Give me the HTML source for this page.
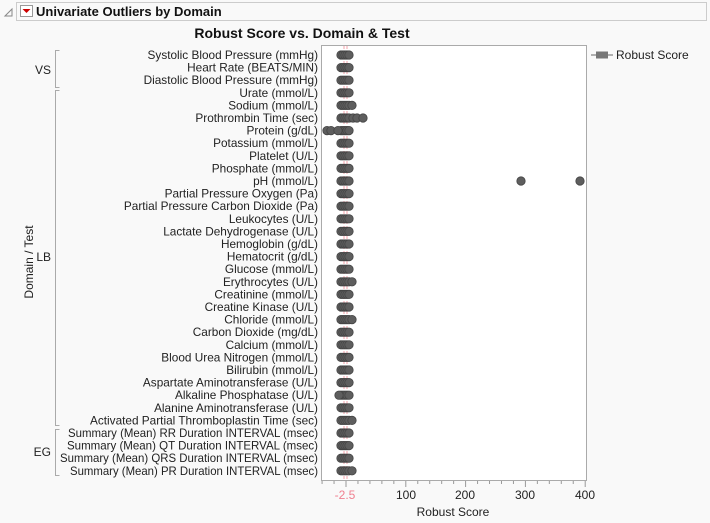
<!DOCTYPE html>
<html><head><meta charset="utf-8"><style>
html,body{margin:0;padding:0;background:#f9f9f9;width:710px;height:523px;overflow:hidden;font-family:"Liberation Sans",sans-serif}
svg text{font-family:"Liberation Sans",sans-serif}
</style></head><body>
<svg id="s" width="710" height="523" xmlns="http://www.w3.org/2000/svg">
<rect x="0" y="0" width="710" height="523" fill="#f9f9f9"/>
<path d="M5 16 L12 9 L12 16 Z" fill="none" stroke="#888" stroke-width="1"/>
<rect x="16.5" y="2.5" width="690" height="18" fill="#f9f9f9" stroke="#ccc"/>
<rect x="20.5" y="5.5" width="12" height="11" fill="#fff" stroke="#999"/>
<path d="M22.5 9 L30.5 9 L26.5 13 Z" fill="#c00"/>
<text x="36" y="16" font-size="13" font-weight="bold" fill="#111">Univariate Outliers by Domain</text>
<text x="302" y="38" font-size="14" font-weight="bold" text-anchor="middle" fill="#111">Robust Score vs. Domain &amp; Test</text>
<rect x="321.5" y="45.5" width="265" height="435" fill="#fff" stroke="#aaa"/>
<line x1="344" y1="46" x2="344" y2="480" stroke="#f4a0a8" stroke-dasharray="3,2"/>
<line x1="347" y1="46" x2="347" y2="480" stroke="#f4a0a8" stroke-dasharray="3,2"/>
<line x1="591" y1="55" x2="613" y2="55" stroke="#666"/>
<rect x="596" y="51.5" width="12" height="7" fill="#777"/>
<text x="616" y="59" font-size="12" fill="#222">Robust Score</text>
<g id="labels" font-size="11.8" fill="#222" text-anchor="end"></g>
<g id="dots"></g>
<g stroke="#aaa" fill="none">
<path d="M59.5 50.5 H55.5 V87.5 H59.5"/><path d="M59.5 90.5 H55.5 V425.5 H59.5"/><path d="M59.5 429.5 H55.5 V475.5 H59.5"/>
</g>
<text x="51" y="74" font-size="12" fill="#222" text-anchor="end">VS</text>
<text x="51" y="261" font-size="12" fill="#222" text-anchor="end">LB</text>
<text x="51" y="456" font-size="12" fill="#222" text-anchor="end">EG</text>
<text transform="translate(33,262) rotate(-90)" font-size="12" fill="#222" text-anchor="middle">Domain / Test</text>
<g id="ticks" stroke="#999"></g>
<text x="345" y="499" font-size="12" fill="#f08090" text-anchor="middle">-2.5</text>
<text x="406" y="499" font-size="12" fill="#222" text-anchor="middle">100</text>
<text x="465" y="499" font-size="12" fill="#222" text-anchor="middle">200</text>
<text x="525" y="499" font-size="12" fill="#222" text-anchor="middle">300</text>
<text x="585" y="499" font-size="12" fill="#222" text-anchor="middle">400</text>
<text x="453" y="516" font-size="12" fill="#222" text-anchor="middle">Robust Score</text>
</svg>
<script>
var L=["Systolic Blood Pressure (mmHg)","Heart Rate (BEATS/MIN)","Diastolic Blood Pressure (mmHg)","Urate (mmol/L)","Sodium (mmol/L)","Prothrombin Time (sec)","Protein (g/dL)","Potassium (mmol/L)","Platelet (U/L)","Phosphate (mmol/L)","pH (mmol/L)","Partial Pressure Oxygen (Pa)","Partial Pressure Carbon Dioxide (Pa)","Leukocytes (U/L)","Lactate Dehydrogenase (U/L)","Hemoglobin (g/dL)","Hematocrit (g/dL)","Glucose (mmol/L)","Erythrocytes (U/L)","Creatinine (mmol/L)","Creatine Kinase (U/L)","Chloride (mmol/L)","Carbon Dioxide (mg/dL)","Calcium (mmol/L)","Blood Urea Nitrogen (mmol/L)","Bilirubin (mmol/L)","Aspartate Aminotransferase (U/L)","Alkaline Phosphatase (U/L)","Alanine Aminotransferase (U/L)","Activated Partial Thromboplastin Time (sec)","Summary (Mean) RR Duration INTERVAL (msec)","Summary (Mean) QT Duration INTERVAL (msec)","Summary (Mean) QRS Duration INTERVAL (msec)","Summary (Mean) PR Duration INTERVAL (msec)"];
var TL={29:228,30:250,31:251,32:258,33:248};
var ns="http://www.w3.org/2000/svg",lg=document.getElementById("labels"),dg=document.getElementById("dots"),tg=document.getElementById("ticks");
var extra={4:[352],5:[353,357,363],6:[327,331,338],10:[521,580],18:[352],21:[352],27:[339],29:[352],33:[352]};
L.forEach(function(t,i){var y=55+i*12.6;var e=document.createElementNS(ns,"text");e.setAttribute("x",318);e.setAttribute("y",y+4);e.textContent=t;if(TL[i]){e.setAttribute("textLength",TL[i]);e.setAttribute("lengthAdjust","spacingAndGlyphs");}lg.appendChild(e);
var xs=[341,343,345,347,349].concat(extra[i]||[]);xs.forEach(function(x){var c=document.createElementNS(ns,"circle");c.setAttribute("cx",x);c.setAttribute("cy",y);c.setAttribute("r",4.2);c.setAttribute("fill","#5e5e5e");c.setAttribute("stroke","#444");c.setAttribute("stroke-width","0.8");dg.appendChild(c);});});
for(var v=-40;v<=400;v+=20){var x=346+v*0.598;var l=document.createElementNS(ns,"line");l.setAttribute("x1",x);l.setAttribute("x2",x);l.setAttribute("y1",481);l.setAttribute("y2",v%100==0?487:484);tg.appendChild(l);}
</script>
</body></html>
